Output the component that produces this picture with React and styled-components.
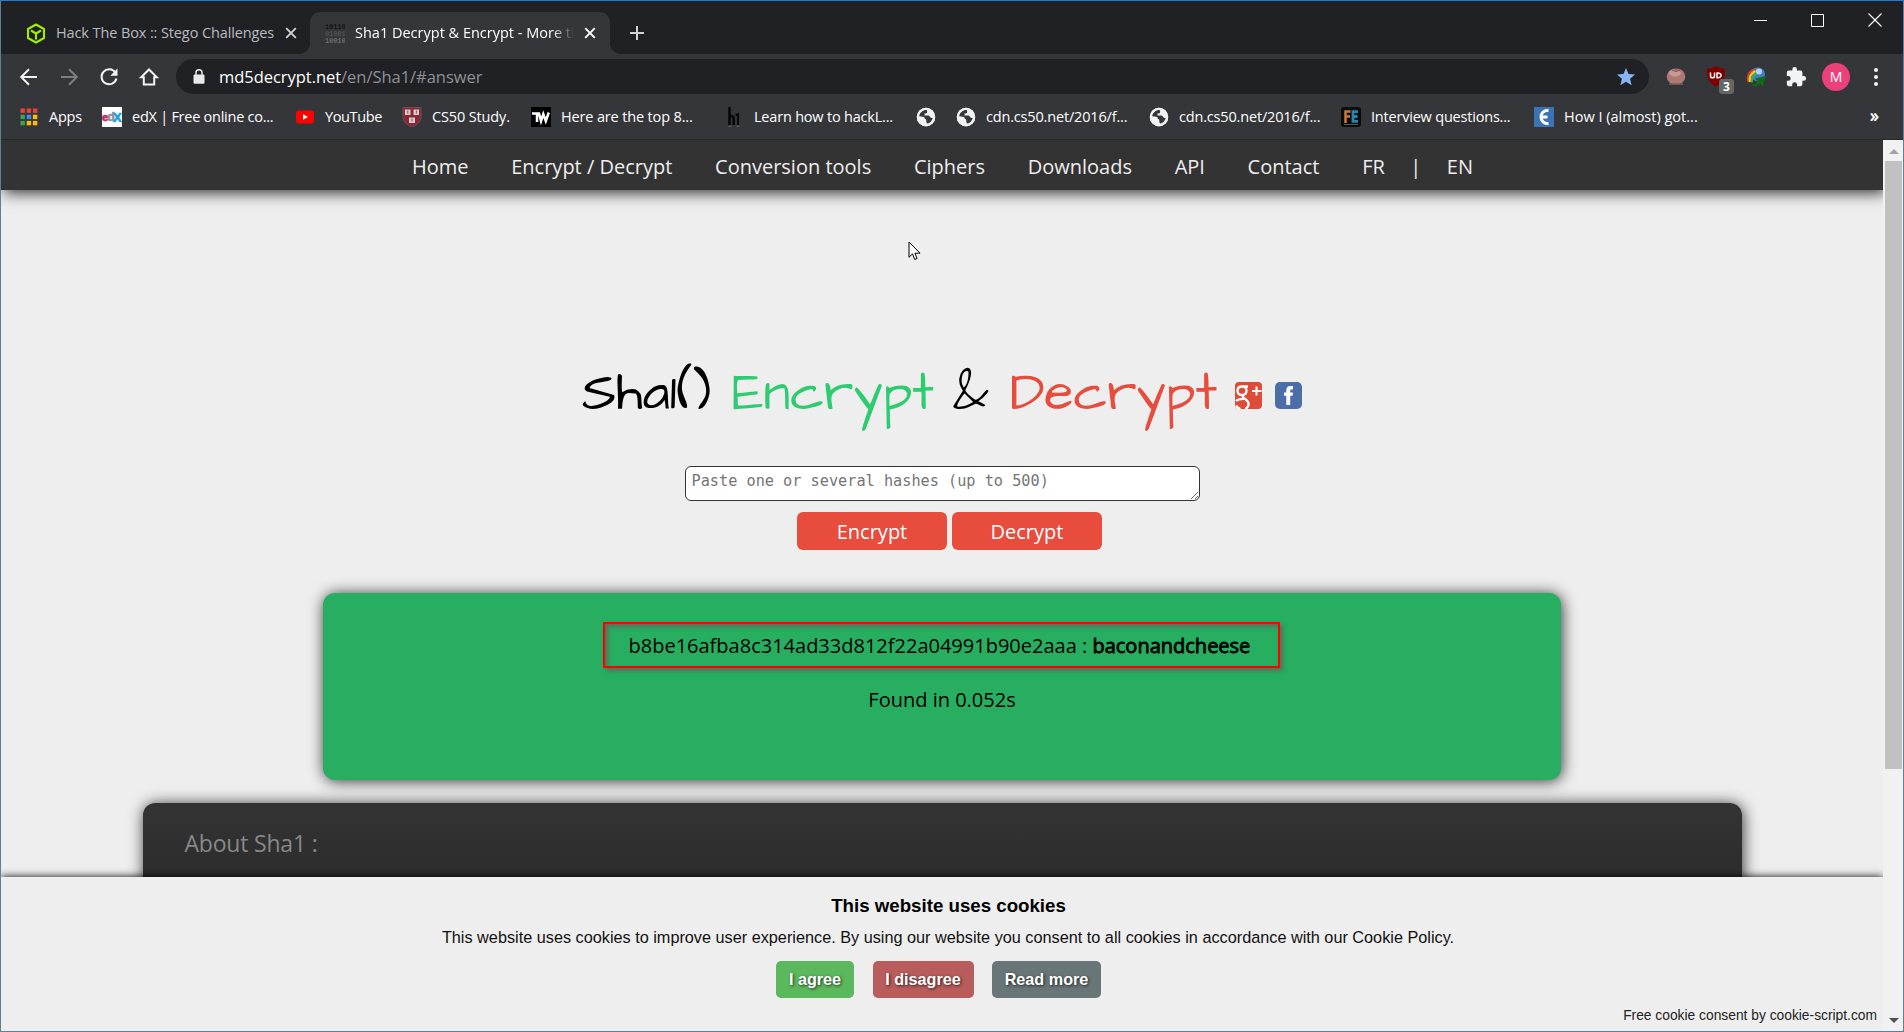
import React from "react";
import styled, { createGlobalStyle } from "styled-components";

const ui = "'Open Sans', 'Noto Sans', sans-serif";
const arial = "'Liberation Sans', Arial, sans-serif";

const Global = createGlobalStyle`
  * { box-sizing: border-box; }
  html, body { margin: 0; padding: 0; overflow: hidden; background: #eee; }
`;

const Window = styled.div`
  width: 1904px;
  height: 1032px;
  display: flex;
  flex-direction: column;
  border: 1px solid #5f7f96;
  border-top-color: #1a7fd4;
  background: #35363a;
  font-family: ${ui};
  overflow: hidden;
`;

/* ---------- tab strip ---------- */
const TabStrip = styled.header`
  height: 53px;
  flex: none;
  display: flex;
  align-items: flex-end;
  background: #202124;
  padding-left: 9px;
`;
const Tab = styled.div`
  position: relative;
  width: 300px;
  height: 42px;
  display: flex;
  align-items: center;
  padding: 0 12px 0 ${(p) => (p.$active ? 15 : 16)}px;
  border-radius: 10px 10px 0 0;
  background: ${(p) => (p.$active ? "#35363a" : "transparent")};
  color: ${(p) => (p.$active ? "#fff" : "#b8bbbf")};
  ${(p) =>
    p.$active &&
    `
    &::before, &::after {
      content: "";
      position: absolute;
      bottom: 0;
      width: 10px;
      height: 10px;
    }
    &::before { left: -10px; background: radial-gradient(circle at 0 0, transparent 9.5px, #35363a 10px); }
    &::after { right: -10px; background: radial-gradient(circle at 100% 0, transparent 9.5px, #35363a 10px); }
  `}
`;
const TabTitle = styled.span`
  width: ${(p) => p.$w}px;
  margin-left: 10px;
  white-space: nowrap;
  font-size: 14.5px;
  line-height: 20px;
  letter-spacing: ${(p) => p.$ls}px;
  ${(p) => p.$fade && "overflow: hidden; mask-image: linear-gradient(90deg, #000 90%, transparent);"}
`;
const TabClose = styled.span`
  display: flex;
  margin-left: ${(p) => p.$gap}px;
`;
const NewTab = styled.div`
  display: flex;
  align-items: center;
  height: 42px;
  padding-left: 19px;
`;
const WindowControls = styled.div`
  display: flex;
  align-items: center;
  align-self: flex-start;
  gap: 44px;
  margin: 12px 21px 0 auto;
`;

/* ---------- toolbar ---------- */
const Toolbar = styled.div`
  height: 45px;
  flex: none;
  display: flex;
  align-items: center;
  padding-left: 16px;
`;
const NavButtons = styled.div`
  display: flex;
  gap: 16px;
  width: 159px;
`;
const Omnibox = styled.div`
  width: 1473px;
  height: 35px;
  display: flex;
  align-items: center;
  border-radius: 18px;
  background: #202124;
  padding: 0 13px 0 17px;
`;
const Url = styled.span`
  flex: 1;
  margin-left: 14px;
  color: #fff;
  font-size: 16.5px;
  line-height: 24px;
  letter-spacing: -0.04px;
`;
const UrlPath = styled.span`
  color: #8e9196;
`;
const Extensions = styled.div`
  display: flex;
  align-items: center;
  gap: 18px;
  margin-left: 16px;
`;
const Extension = styled.span`
  position: relative;
  display: flex;
  width: 22px;
  justify-content: center;
`;
const Badge = styled.span`
  position: absolute;
  left: 14px;
  top: 13px;
  width: 15px;
  height: 15px;
  border-radius: 3px;
  background: #666;
  color: #fff;
  font: bold 12px/15px ${ui};
  text-align: center;
`;
const Avatar = styled.span`
  width: 28px;
  height: 28px;
  border-radius: 50%;
  margin-left: -3px;
  background: #ec407a;
  color: #fff;
  font-size: 14px;
  line-height: 28px;
  text-align: center;
`;
const MenuDots = styled.span`
  display: flex;
  flex-direction: column;
  gap: 3px;
  margin-left: 6px;
  i { width: 4px; height: 4px; border-radius: 50%; background: #f1f3f4; }
`;

/* ---------- bookmarks ---------- */
const Bookmarks = styled.div`
  height: 41px;
  flex: none;
  display: flex;
  align-items: center;
  gap: 20px;
  padding: 0 24px 4px 18px;
  border-bottom: 1px solid #28292c;
`;
const Bookmark = styled.div`
  width: ${(p) => p.$w}px;
  flex: none;
  display: flex;
  align-items: center;
  gap: 10px;
  color: #fff;
  font-size: 14.5px;
  line-height: 20px;
  white-space: nowrap;
  letter-spacing: ${(p) => p.$ls || 0}px;
  svg { flex: none; }
`;
const Overflow = styled.span`
  margin-left: auto;
  color: #fff;
  font-size: 18px;
  line-height: 20px;
  padding-bottom: 4px;
  -webkit-text-stroke: 0.5px #fff;
`;

/* ---------- page ---------- */
const Viewport = styled.div`
  flex: 1;
  min-height: 0;
  display: flex;
`;
const Page = styled.main`
  position: relative;
  width: 1882px;
  display: flex;
  flex-direction: column;
  align-items: center;
  background: #eee;
  overflow: hidden;
`;
const SiteNav = styled.nav`
  width: 100%;
  height: 50px;
  flex: none;
  display: flex;
  align-items: center;
  justify-content: center;
  gap: 42.7px;
  padding: 3px 0 0 1px;
  background: #333;
  box-shadow: 3px 3px 14px #333;
  color: #eee;
  font-size: 20px;
  line-height: 28px;
`;
const Languages = styled.span`
  display: flex;
  gap: 25.5px;
`;
const Title = styled.h1`
  display: flex;
  flex: none;
  width: 720px;
  height: 64px;
  margin: 169px 0 0;
  font: 400 53.33px/70px "Architects Daughter", Inter, sans-serif;
`;
const Word = styled.span`
  width: ${(p) => p.$w}px;
  color: ${(p) => p.$c || "#000"};
  white-space: nowrap;
`;
const Social = styled.span`
  display: flex;
  gap: 13px;
  padding-top: 23px;
  height: 50px;
`;
const HashInput = styled.textarea`
  flex: none;
  width: 515px;
  height: 35px;
  margin: 43px 0 0;
  padding: 5px 6px;
  border: 1px solid #333;
  border-radius: 6px;
  background: #fff;
  font: 15.22px/18px "DejaVu Sans Mono", monospace;
  overflow: hidden;
  outline: none;
  &::placeholder { color: #757575; opacity: 1; }
`;
const Actions = styled.div`
  flex: none;
  display: flex;
  gap: 5px;
  margin: 11px 0 0 15px;
`;
const Action = styled.button`
  width: 150px;
  height: 38px;
  padding: 1px 0 0;
  border: 0;
  border-radius: 6px;
  background: #e74c3c;
  color: #fff;
  font: 20px/27px ${ui};
`;
const Result = styled.section`
  width: 1238px;
  height: 187px;
  flex: none;
  margin-top: 43px;
  padding-top: 29px;
  display: flex;
  flex-direction: column;
  align-items: center;
  border-radius: 12px;
  background: #27ae60;
  box-shadow: 1px 1px 15px #333;
  color: #000;
  font-size: 20px;
  line-height: 27px;
`;
const Highlight = styled.div`
  width: 677px;
  height: 46px;
  margin-left: -2px;
  padding: 8px 0 0 24px;
  border: 2px solid #f00;
  box-shadow: 3px 3px 4px rgba(110, 90, 90, 0.75), inset 3px 3px 4px rgba(110, 90, 90, 0.75);
  white-space: nowrap;
`;
const Plain = styled.span`
  font-weight: 400;
`;
const Found = styled.b`
  font-weight: 400;
  -webkit-text-stroke: 0.8px #000;
`;
const Timing = styled.div`
  margin-top: 18px;
`;
const About = styled.section`
  width: 1599px;
  height: 300px;
  flex: none;
  margin: 23px 0 0;
  padding: 24px 42px;
  border-radius: 12px 12px 0 0;
  background: linear-gradient(#333, #2e2e2e 60px, #222);
  box-shadow: 1px 1px 15px #333;
  color: #888;
  font-size: 23px;
  line-height: 32px;
  letter-spacing: -0.2px;
`;
const CookieBar = styled.aside`
  position: absolute;
  left: 0;
  bottom: 0;
  width: 100%;
  height: 154px;
  display: flex;
  flex-direction: column;
  align-items: center;
  padding-top: 17px;
  background: #eee;
  box-shadow: 0 0 8px #000;
  color: #000;
  font-family: ${arial};
`;
const CookieTitle = styled.div`
  margin-left: 13px;
  font-size: 18.7px;
  font-weight: bold;
  line-height: 23px;
`;
const CookieText = styled.div`
  margin: 10px 0 0 12px;
  font-size: 16.25px;
  line-height: 20px;
  white-space: nowrap;
  color: #111;
`;
const CookieButtons = styled.div`
  display: flex;
  gap: 18.5px;
  margin: 14px 0 0 -7px;
`;
const CookieButton = styled.button`
  width: ${(p) => p.$w}px;
  height: 37px;
  padding: 0 0 2px;
  border: 0;
  border-radius: 5px;
  background: ${(p) => p.$bg};
  color: #fff;
  font: bold 16.2px/20px ${arial};
  text-shadow: 1px 1px 3px rgba(0, 0, 0, 0.75);
`;
const Credit = styled.div`
  align-self: flex-end;
  margin: 9px 6px 0 0;
  font-size: 13.8px;
  line-height: 18px;
  color: #222;
`;
const Scrollbar = styled.div`
  width: 20px;
  display: flex;
  flex-direction: column;
  align-items: center;
  background: #f1f1f1;
  padding: 9px 0 8px 1px;
`;
const Thumb = styled.div`
  width: 17px;
  height: 608px;
  margin: 7px 0 auto;
  background: #c1c1c1;
`;
const Arrow = styled.i`
  border: 5px solid transparent;
  border-top-width: ${(p) => (p.$up ? 0 : 5)}px;
  border-bottom-width: ${(p) => (p.$up ? 5 : 0)}px;
  border-top-color: #505050;
  border-bottom-color: #a3a3a3;
`;
const Pointer = styled.span`
  position: absolute;
  left: 907px;
  top: 101px;
  line-height: 0;
`;

/* ---------- drawings ---------- */
const Cross = ({ c }) => (
  <svg width="12" height="12" viewBox="0 0 12 12" stroke={c} strokeWidth="1.9"><path d="M1.2 1.2l9.6 9.6M10.8 1.2l-9.6 9.6" /></svg>
);
const Box24 = ({ children, size = 24 }) => (
  <svg width={size} height={size} viewBox="0 0 24 24">{children}</svg>
);
const Globe = () => (
  <svg width="20" height="20" viewBox="0 0 20 20">
    <circle cx="10" cy="10" r="9.2" fill="#f1f3f4" />
    <path d="M10.5 2.8C6.8 3.2 3.4 6 3.2 9.3l3.8.4c1.2.2 1.8.8 1.8 1.9 0 .8.7 1.2 1.5 1.2v1.7c0 1 .6 1.6 1.3 2.1 2.8-.8 4.6-3 5.1-5.6-1.3 0-2.2-.3-2.7-1.3-.4-.9-1.2-1.2-2.2-1.2H8.5V6.6h1.6c1 0 1.4-.6 1.4-1.5z" fill="#35363a" />
    <path d="M11.2 2.8c.5 1.6.2 3.3-1.2 4.1l3.6.4c.9 1.8 1.6 2.2 3.2 1.9" fill="#f1f3f4" />
    <circle cx="10" cy="10" r="8.4" fill="none" stroke="#f1f3f4" strokeWidth="1.7" />
  </svg>
);
const AppsIcon = () => {
  const colors = ["#ea4335", "#ea4335", "#ea4335", "#34a853", "#4285f4", "#fbbc04", "#34a853", "#fbbc04", "#fbbc04"];
  return (
    <svg width="20" height="20" viewBox="0 0 20 20">
      {colors.map((c, i) => (
        <rect key={i} x={1.5 + (i % 3) * 6.2} y={1.5 + Math.floor(i / 3) * 6.2} width="4.4" height="4.4" fill={c} />
      ))}
    </svg>
  );
};
const EdxIcon = () => (
  <svg width="20" height="20" viewBox="0 0 20 20">
    <rect width="20" height="20" fill="#fff" />
    <g fontFamily="Liberation Sans" fontWeight="bold" strokeWidth=".6">
      <text x="0" y="14.3" fontSize="11.5" fill="#c0256b" stroke="#c0256b">e</text>
      <text x="5.5" y="14.3" fontSize="12" fill="#8b8f93" stroke="#8b8f93">d</text>
      <text x="11" y="14.5" fontSize="13" fill="#1ba1e2" stroke="#1ba1e2">X</text>
    </g>
  </svg>
);
const YoutubeIcon = () => (
  <svg width="20" height="20" viewBox="0 0 20 20"><rect x="1" y="3.5" width="18" height="13" rx="3" fill="#f00" /><path d="M8 7.3l5 2.7-5 2.7z" fill="#fff" /></svg>
);
const ShieldIcon = () => (
  <svg width="20" height="20" viewBox="0 0 20 20">
    <path d="M1 .5h18v9c0 4-2.5 8-9 10.5C3.5 17.5 1 13.5 1 9.500z" fill="#8c2634" stroke="#6a5555" />
    <g fill="#d5cccc"><rect x="3" y="2.5" width="5.5" height="5.5" /><rect x="11.5" y="2.5" width="5.5" height="5.5" /><rect x="7" y="10.5" width="6" height="5.5" /></g>
    <g fill="#8c2634"><rect x="5.4" y="3.5" width=".8" height="3" /><rect x="13.9" y="3.5" width=".8" height="3" /><rect x="9.6" y="11.5" width=".8" height="3" /></g>
  </svg>
);
const TwIcon = () => (
  <svg width="20" height="20" viewBox="0 0 20 20"><rect width="20" height="20" fill="#000" /><path d="M1 6.500h5v8.500M6.500 6.500h1.500l2 7.500 2.300-7 2.500 7 3-8.500" fill="none" stroke="#fff" strokeWidth="2.500" /></svg>
);
const H1Icon = () => (
  <svg width="20" height="20" viewBox="0 0 20 20"><path d="M5.500 0v18M5.500 10c2-1.500 4.200-1 4.200 1.500V18" fill="none" stroke="#050505" strokeWidth="2.4" /><path d="M11.500 8.500l2.500-1.500v11" fill="none" stroke="#050505" strokeWidth="1.8" /><path d="M4.500 19.300h3M12.500 19.300h3" stroke="#66686c" /></svg>
);
const FeIcon = () => (
  <svg width="20" height="20" viewBox="0 0 20 20"><rect width="20" height="20" rx="3" fill="#0c0c0c" /><path d="M9.500 4.600H4.500V16M4.500 9.500h4.500" fill="none" stroke="#c9793a" strokeWidth="2.5" /><path d="M17 4.600h-5v9.800H17M12 9.500h4.500" fill="none" stroke="#2186b4" strokeWidth="2.8" /><path d="M3 17.500h14" stroke="#555" strokeWidth="1" /></svg>
);
const EIcon = () => (
  <svg width="20" height="20" viewBox="0 0 20 20"><rect width="20" height="20" fill="#3a74b4" /><path d="M14.500 3.500C10 3 7 6 7 10s3 7 7.500 6.500M7 10h6.500" fill="none" stroke="#fff" strokeWidth="3" /></svg>
);

const bookmarks = [
  { label: "Apps", icon: <AppsIcon />, w: 63, ls: -0.25 },
  { label: "edX | Free online co...", icon: <EdxIcon />, w: 173, ls: -0.25 },
  { label: "YouTube", icon: <YoutubeIcon />, w: 87, ls: -0.37 },
  { label: "CS50 Study.", icon: <ShieldIcon />, w: 109, ls: -0.14 },
  { label: "Here are the top 8...", icon: <TwIcon />, w: 173, ls: -0.15 },
  { label: "Learn how to hackL...", icon: <H1Icon />, w: 172, ls: -0.2 },
  { label: "", icon: <Globe />, w: 20 },
  { label: "cdn.cs50.net/2016/f...", icon: <Globe />, w: 173, ls: -0.17 },
  { label: "cdn.cs50.net/2016/f...", icon: <Globe />, w: 172, ls: -0.17 },
  { label: "Interview questions...", icon: <FeIcon />, w: 173, ls: -0.2 },
  { label: "How I (almost) got...", icon: <EIcon />, w: 173, ls: 0 },
];

const links = ["Home", "Encrypt / Decrypt", "Conversion tools", "Ciphers", "Downloads", "API", "Contact"];

export default function App() {
  return (
    <Window>
      <Global />
      <TabStrip>
        <Tab>
          <svg width="20" height="21" viewBox="0 0 20 21" fill="none" stroke="#9fef00" strokeWidth="2.1" strokeLinejoin="round">
            <path d="M10 1.500l8 4.500v9l-8 4.500L2 15V6zM5 7.500l5 3 5-3M10 10.500v6" />
          </svg>
          <TabTitle $w={221} $ls={-0.11}>Hack The Box :: Stego Challenges</TabTitle>
          <TabClose $gap={8}><Cross c="#d0d2d5" /></TabClose>
        </Tab>
        <Tab $active>
          <svg width="20" height="20" viewBox="0 0 20 20" fontFamily="Liberation Mono" fontWeight="bold" fontSize="7.2" letterSpacing="-.2">
            <text x="0" y="5.5" fill="#161616">10110</text>
            <text x="0" y="12.7" fill="#505155">01001</text>
            <text x="0" y="19.7" fill="#6a6b6f">10010</text>
          </svg>
          <TabTitle $w={219} $ls={0} $fade>Sha1 Decrypt &amp; Encrypt - More th</TabTitle>
          <TabClose $gap={10}><Cross c="#fff" /></TabClose>
        </Tab>
        <NewTab>
          <svg width="16" height="16" viewBox="0 0 16 16" stroke="#d0d2d5" strokeWidth="2"><path d="M8 1v14M1 8h14" /></svg>
        </NewTab>
        <WindowControls>
          <svg width="13" height="13" viewBox="0 0 13 13" stroke="#fff"><path d="M0 6.500h13" /></svg>
          <svg width="13" height="13" viewBox="0 0 13 13" stroke="#fff" fill="none"><path d="M.5.5h12v12H.5z" /></svg>
          <svg width="14" height="14" viewBox="0 0 14 14" stroke="#fff" strokeWidth="1.2"><path d="M.5.5l13 13M13.500.5l-13 13" /></svg>
        </WindowControls>
      </TabStrip>

      <Toolbar>
        <NavButtons>
          <Box24><path d="M20 12H4.500M12 4.200L4.200 12l7.800 7.800" fill="none" stroke="#f1f3f4" strokeWidth="2" /></Box24>
          <Box24><path d="M4 12h15.500M12 4.200l7.800 7.800-7.800 7.800" fill="none" stroke="#7d7f83" strokeWidth="2" /></Box24>
          <Box24><path d="M18.400 7.700A7.500 7.500 0 1 0 19.400 13.500" fill="none" stroke="#f1f3f4" strokeWidth="2" /><path d="M20.500 3.500v7.200h-7.200z" fill="#f1f3f4" /></Box24>
          <Box24><path d="M4.200 12.300L12 4.500l7.800 7.800h-2.600v7.200H6.800v-7.200z" fill="none" stroke="#f1f3f4" strokeWidth="2" /></Box24>
        </NavButtons>
        <Omnibox>
          <svg width="12" height="15" viewBox="0 0 12 15"><rect x=".5" y="5.5" width="11" height="9.3" rx="1.2" fill="#e8eaed" /><path d="M3 6V3.800a3 3 0 0 1 6 0V6" fill="none" stroke="#e8eaed" strokeWidth="1.5" /></svg>
          <Url>md5decrypt.net<UrlPath>/en/Sha1/#answer</UrlPath></Url>
          <svg width="20" height="20" viewBox="0 0 24 24"><path d="M12 17.800l6.700 4-1.800-7.600 5.900-5.100-7.800-.7L12 1.200 9 8.400l-7.800.7 5.900 5.100-1.800 7.600z" fill="#8ab4f8" /></svg>
        </Omnibox>
        <Extensions>
          <Extension>
            <svg width="20" height="19" viewBox="0 0 20 19"><ellipse cx="10" cy="9.5" rx="9.3" ry="8" fill="#b07872" /><ellipse cx="9" cy="6" rx="6" ry="3.5" fill="#c79a95" /><path d="M6 3.200l4 1.200 4-1.400M10 1.500v3" stroke="#7a514c" fill="none" /><path d="M3 17h14" stroke="#77625e" strokeWidth="1.5" /></svg>
          </Extension>
          <Extension>
            <svg width="20" height="21" viewBox="0 0 20 21"><path d="M10 0c3 2 6 2.500 9 2.500 0 9-1 14-9 18C2 16.500 1 11.500 1 2.500 4 2.500 7 2 10 0z" fill="#800000" /><path d="M4.500 6.500v3.500c0 2.400 4 2.400 4 0V6.500M11 6.500v5.300c5.500.5 5.500-5.500 0-4.800z" fill="none" stroke="#fff" strokeWidth="1.5" /></svg>
            <Badge>3</Badge>
          </Extension>
          <Extension>
            <svg width="22" height="20" viewBox="0 0 22 20"><circle cx="13" cy="7.5" r="7" fill="#3f7fca" /><circle cx="14" cy="4.5" r="3" fill="#b7d5f3" /><path d="M10 2C4 4 1.500 9 3 14.500" fill="none" stroke="#e23b2e" strokeWidth="2" /><path d="M10.500 4C6 6 4 10 4.800 15" fill="none" stroke="#f4c51c" strokeWidth="2.4" /><path d="M11 6.500C8 8 6.500 10.500 6.800 15.500" fill="none" stroke="#37b34a" strokeWidth="2.2" /><path d="M5 17c3 1.500 6 0 8-2.500L10 11.500l11-2.500-3.500 10.500-2-2.500c-3 2.500-7 3-10.500 0z" fill="#126a17" /></svg>
          </Extension>
          <Extension>
            <Box24 size={22}><path d="M20.500 11H19V7a2 2 0 0 0-2-2h-4V3.500a2.500 2.500 0 0 0-5 0V5H4a2 2 0 0 0-2 2v3.800h1.500a2.700 2.700 0 0 1 0 5.400H2V20a2 2 0 0 0 2 2h3.800v-1.500a2.700 2.700 0 0 1 5.400 0V22H17a2 2 0 0 0 2-2v-4h1.500a2.500 2.500 0 0 0 0-5z" fill="#f1f3f4" /></Box24>
          </Extension>
          <Avatar>M</Avatar>
          <MenuDots><i /><i /><i /></MenuDots>
        </Extensions>
      </Toolbar>

      <Bookmarks>
        {bookmarks.map((b, i) => (
          <Bookmark key={i} $w={b.w} $ls={b.ls}>{b.icon}{b.label}</Bookmark>
        ))}
        <Overflow>»</Overflow>
      </Bookmarks>

      <Viewport>
        <Page>
          <SiteNav>
            {links.map((l) => <span key={l}>{l}</span>)}
            <Languages><span>FR</span><span>|</span><span>EN</span></Languages>
          </SiteNav>

          <Title>
            <Word $w={150}>Sha1()</Word>
            <Word $w={221} $c="#2ecc71">Encrypt</Word>
            <Word $w={57}>&amp;</Word>
            <Word $w={225} $c="#e74c3c">Decrypt</Word>
            <Social>
              <svg width="27" height="27" viewBox="0 0 27 27"><rect width="27" height="27" rx="4" fill="#dd4b39" /><path d="M13 4.500H7.500C4 4.500 2.500 6 2.500 8.500S4 13 7 13s4.500-2 4.500-4.500S9.500 4.500 7.500 4.500M8 13c-1 1.500 0 2.500 1.500 3.500 3 2 4.500 4 4 6.500-.3 2-1.500 3-3 4M1 19c2-2 5-2.300 8-2.200M1 23.500c1 2 2.500 3 4.500 3.500" fill="none" stroke="#fff" strokeWidth="2.3" /><path d="M21.500 4.500v9M17 9h9.500" stroke="#fff" strokeWidth="2" /></svg>
              <svg width="27" height="27" viewBox="0 0 27 27"><rect width="27" height="27" rx="5" fill="#4b6ea9" /><path d="M11.300 23v-9.200H9v-3.400h2.300V8.300C11.300 5.500 12.800 4 15.500 4H18v3.500h-1.600c-1 0-1.200.5-1.200 1.300v1.600H18l-.4 3.400h-2.400V23z" fill="#fff" /></svg>
            </Social>
          </Title>

          <HashInput placeholder="Paste one or several hashes (up to 500)" />
          <Actions>
            <Action>Encrypt</Action>
            <Action>Decrypt</Action>
          </Actions>

          <Result>
            <Highlight>
              <Plain>b8be16afba8c314ad33d812f22a04991b90e2aaa : </Plain>
              <Found>baconandcheese</Found>
            </Highlight>
            <Timing>Found in 0.052s</Timing>
          </Result>

          <About>About Sha1 :</About>

          <CookieBar>
            <CookieTitle>This website uses cookies</CookieTitle>
            <CookieText>This website uses cookies to improve user experience. By using our website you consent to all cookies in accordance with our Cookie Policy.</CookieText>
            <CookieButtons>
              <CookieButton $w={78} $bg="#5cb85c">I agree</CookieButton>
              <CookieButton $w={101} $bg="#b85c5c">I disagree</CookieButton>
              <CookieButton $w={109} $bg="#697677">Read more</CookieButton>
            </CookieButtons>
            <Credit>Free cookie consent by cookie-script.com</Credit>
          </CookieBar>

          <Pointer>
            <svg width="13" height="20" viewBox="0 0 13 20"><path d="M1 1v15.300l3.500-3.400 2.200 5.600 2.400-1-2.200-5.300H12z" fill="#fff" stroke="#000" /></svg>
          </Pointer>
        </Page>
        <Scrollbar>
          <Arrow $up />
          <Thumb />
          <Arrow />
        </Scrollbar>
      </Viewport>
    </Window>
  );
}
